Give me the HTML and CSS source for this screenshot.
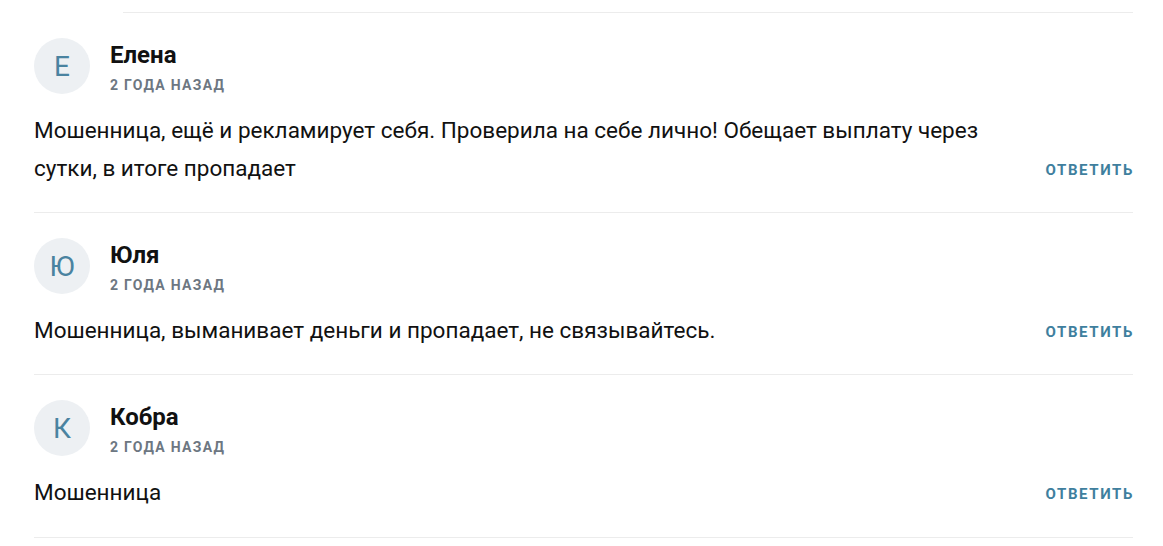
FILE: index.html
```html
<!DOCTYPE html>
<html lang="ru">
<head>
<meta charset="utf-8">
<link rel="stylesheet" href="styles.css">
</head>
<body>
<div class="comments">
  <div class="top-line"></div>
  <div class="comment">
    <div class="head">
      <div class="avatar">Е</div>
      <div class="meta">
        <div class="name">Елена</div>
        <div class="date">2 года назад</div>
      </div>
    </div>
    <div class="body">
      <p class="text">Мошенница, ещё и рекламирует себя. Проверила на себе лично! Обещает выплату через сутки, в итоге пропадает</p>
      <a class="reply">Ответить</a>
    </div>
  </div>
  <div class="comment">
    <div class="head">
      <div class="avatar">Ю</div>
      <div class="meta">
        <div class="name">Юля</div>
        <div class="date">2 года назад</div>
      </div>
    </div>
    <div class="body">
      <p class="text">Мошенница, выманивает деньги и пропадает, не связывайтесь.</p>
      <a class="reply">Ответить</a>
    </div>
  </div>
  <div class="comment">
    <div class="head">
      <div class="avatar">К</div>
      <div class="meta">
        <div class="name">Кобра</div>
        <div class="date">2 года назад</div>
      </div>
    </div>
    <div class="body">
      <p class="text">Мошенница</p>
      <a class="reply">Ответить</a>
    </div>
  </div>
</div>
</body>
</html>
```
FILE: styles.css
```css
html, body {
  margin: 0;
  padding: 0;
  background: #ffffff;
}
body {
  font-family: Roboto, "Liberation Sans", sans-serif;
  color: #111111;
  padding: 12px 30px 0 34px;
}
.top-line {
  margin-left: 89px;
  height: 1px;
  background: #ececec;
}
.comment {
  padding: 25px 0 25px;
  border-bottom: 1px solid #ececec;
}
.comment:last-child {
  padding-bottom: 26px;
}
.head {
  display: flex;
  align-items: flex-start;
  gap: 20px;
}
.avatar {
  width: 56px;
  height: 56px;
  border-radius: 50%;
  background: #edf0f3;
  color: #4a83a0;
  font-size: 28px;
  display: flex;
  align-items: center;
  justify-content: center;
  flex-shrink: 0;
}
.meta {
  display: flex;
  flex-direction: column;
  gap: 7px;
  padding-top: 3px;
}
.name {
  font-size: 24px;
  font-weight: 700;
  line-height: 28px;
  color: #111111;
}
.date {
  font-size: 14px;
  font-weight: 700;
  letter-spacing: 1.3px;
  text-transform: uppercase;
  color: #6d7782;
  line-height: 18px;
}
.body {
  display: flex;
  align-items: flex-end;
  gap: 30px;
  margin-top: 17px;
}
.text {
  flex: 1;
  margin: 0;
  font-size: 22.5px;
  line-height: 38px;
}
.reply {
  margin-left: auto;
  font-size: 15px;
  font-weight: 700;
  letter-spacing: 1.6px;
  text-transform: uppercase;
  color: #3f7f9e;
  line-height: 38px;
  cursor: pointer;
  margin-bottom: -2px;
  margin-right: -1px;
}
```
